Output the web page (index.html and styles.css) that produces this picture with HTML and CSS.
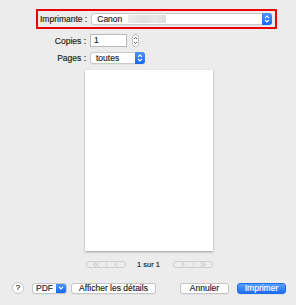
FILE: index.html
```html
<!DOCTYPE html>
<html lang="fr">
<head>
  <meta charset="UTF-8">
  <title>Imprimer</title>
  <meta name="viewport" content="width=device-width, initial-scale=1.0">
  <link rel="stylesheet" href="styles.css">
</head>
<body>
  <div class="dialog">
    <div class="printer-box">
      <span class="label">Imprimante :</span>
      <div class="popup popup-wide">
        <span class="popup-text">Canon</span>
        <span class="blurred"></span>
        <span class="arrows">
          <svg width="6" height="8" viewBox="0 0 6 8"><path d="M1 3 L3 1 L5 3 M1 5 L3 7 L5 5" fill="none" stroke="#fff" stroke-width="1.1"/></svg>
        </span>
      </div>
    </div>

    <div class="form">
      <span class="label">Copies :</span>
      <div class="copies">
        <div class="field">1</div>
        <div class="stepper">
          <svg width="5" height="9" viewBox="0 0 5 9"><path d="M1 3 L2.5 1.5 L4 3 M1 6 L2.5 7.5 L4 6" fill="none" stroke="#444" stroke-width="0.9"/></svg>
        </div>
      </div>
      <span class="label">Pages :</span>
      <div class="popup popup-small">
        <span class="popup-text">toutes</span>
        <span class="arrows">
          <svg width="6" height="8" viewBox="0 0 6 8"><path d="M1 3 L3 1 L5 3 M1 5 L3 7 L5 5" fill="none" stroke="#fff" stroke-width="1.1"/></svg>
        </span>
      </div>
    </div>

    <div class="preview">
      <div class="page"></div>
    </div>

    <div class="pager">
      <div class="seg">
        <span><svg width="6" height="5" viewBox="0 0 6 5"><path d="M2.5 0.5 L0.8 2.5 L2.5 4.5 M5.2 0.5 L3.5 2.5 L5.2 4.5" fill="none" stroke="#a8a8a8" stroke-width="0.7"/></svg></span>
        <span><svg width="4" height="5" viewBox="0 0 4 5"><path d="M2.8 0.5 L1 2.5 L2.8 4.5" fill="none" stroke="#a8a8a8" stroke-width="0.7"/></svg></span>
      </div>
      <span class="pager-text">1 sur 1</span>
      <div class="seg">
        <span><svg width="4" height="5" viewBox="0 0 4 5"><path d="M1.2 0.5 L3 2.5 L1.2 4.5" fill="none" stroke="#a8a8a8" stroke-width="0.7"/></svg></span>
        <span><svg width="6" height="5" viewBox="0 0 6 5"><path d="M0.8 0.5 L2.5 2.5 L0.8 4.5 M3.5 0.5 L5.2 2.5 L3.5 4.5" fill="none" stroke="#a8a8a8" stroke-width="0.7"/></svg></span>
      </div>
    </div>

    <div class="footer">
      <div class="help">?</div>
      <div class="btn pdf">
        <span class="pdf-text">PDF</span>
        <span class="pdf-arrow">
          <svg width="6" height="4" viewBox="0 0 6 4"><path d="M1 1 L3 3 L5 1" fill="none" stroke="#fff" stroke-width="1.1"/></svg>
        </span>
      </div>
      <div class="btn details">Afficher les détails</div>
      <div class="spacer"></div>
      <div class="btn cancel">Annuler</div>
      <div class="btn primary">Imprimer</div>
    </div>
  </div>
</body>
</html>
```

FILE: styles.css
```css
html, body {
  margin: 0;
  padding: 0;
  background-color: #ececec;
  color: #1a1a1a;
  font-family: 'Liberation Sans', Arial, sans-serif;
  font-size: 8.5px;
  -webkit-text-stroke: 0.15px #1a1a1a;
}
.dialog {
  width: 296px;
  height: 305px;
  display: flex;
  flex-direction: column;
  overflow: hidden;
}
.label {
  white-space: nowrap;
}
.printer-box {
  box-sizing: border-box;
  margin: 9px 0 0 36px;
  width: 241px;
  height: 20px;
  border: 2px solid #ee0000;
  padding: 0 3px 0 2px;
  display: flex;
  align-items: center;
  gap: 4px;
}
.popup {
  box-sizing: border-box;
  height: 12px;
  background: #fff;
  border: 1px solid #c9c9c9;
  border-radius: 3px;
  display: flex;
  align-items: center;
  padding-left: 5px;
  box-shadow: 0 0.5px 0.5px rgba(0, 0, 0, 0.08);
}
.popup-wide {
  flex-grow: 1;
}
.popup-small {
  width: 55px;
}
.popup-text {
  line-height: 10px;
}
.blurred {
  width: 38px;
  height: 8px;
  margin-left: 6px;
  background: linear-gradient(90deg, #ececec, #e0e0e0 40%, #e8e8e8 70%, #dedede);
  filter: blur(0.6px);
}
.arrows {
  margin-left: auto;
  width: 10px;
  height: 12px;
  margin-right: -1px;
  margin-top: -1px;
  margin-bottom: -1px;
  border-radius: 0 3px 3px 0;
  background: linear-gradient(#4c93fb, #1668f2);
  display: flex;
  align-items: center;
  justify-content: center;
}
.form {
  display: grid;
  grid-template-columns: 86px auto;
  column-gap: 4px;
  row-gap: 5px;
  margin-top: 5px;
  align-items: center;
  justify-items: start;
}
.form .label {
  justify-self: end;
}
.copies {
  display: flex;
  align-items: center;
  gap: 5px;
}
.field {
  box-sizing: border-box;
  width: 37px;
  height: 13px;
  background: #fff;
  border: 1px solid #b9b9b9;
  padding-left: 3px;
  line-height: 11px;
}
.stepper {
  box-sizing: border-box;
  width: 7px;
  height: 13px;
  background: #fff;
  border: 1px solid #c4c4c4;
  border-radius: 3px;
  display: flex;
  align-items: center;
  justify-content: center;
}
.preview {
  display: flex;
  justify-content: center;
  margin-top: 6px;
  padding-left: 2px;
}
.page {
  width: 128px;
  height: 181px;
  background: #fff;
  box-shadow: 0 1px 2px rgba(0, 0, 0, 0.35);
}
.pager {
  display: flex;
  align-items: center;
  margin: 9px 0 0 86px;
  width: 127px;
  height: 9px;
}
.seg {
  box-sizing: border-box;
  width: 40px;
  height: 7px;
  border: 1px solid #cfcfcf;
  border-radius: 3px;
  display: flex;
}
.seg span {
  flex: 1;
  display: flex;
  align-items: center;
  justify-content: center;
}
.seg span + span {
  border-left: 1px solid #d6d6d6;
}
.pager-text {
  flex: 1;
  text-align: center;
  font-size: 7.5px;
  padding-right: 2px;
}
.footer {
  display: flex;
  align-items: center;
  margin-top: 13px;
  padding: 0 10px 0 12px;
  height: 12px;
}
.help {
  box-sizing: border-box;
  width: 12px;
  height: 12px;
  border-radius: 50%;
  background: #fff;
  border: 1px solid #c6c6c6;
  text-align: center;
  line-height: 10px;
  font-size: 8px;
  margin-right: 8px;
}
.btn {
  box-sizing: border-box;
  height: 11px;
  background: #fff;
  border: 1px solid #c6c6c6;
  border-radius: 3px;
  display: flex;
  align-items: center;
  justify-content: center;
  line-height: 9px;
  box-shadow: 0 0.5px 0.5px rgba(0, 0, 0, 0.08);
}
.pdf {
  width: 35px;
  justify-content: flex-start;
  overflow: hidden;
}
.pdf-text {
  flex: 1;
  text-align: center;
}
.pdf-arrow {
  width: 10px;
  align-self: stretch;
  background: linear-gradient(#4c93fb, #1668f2);
  display: flex;
  align-items: center;
  justify-content: center;
}
.details {
  width: 85px;
  margin-left: 4px;
}
.spacer {
  flex: 1;
}
.cancel {
  width: 49px;
}
.primary {
  width: 49px;
  margin-left: 8px;
  color: #fff;
  -webkit-text-stroke: 0.15px #fff;
  border-color: #1f6fe9;
  background: linear-gradient(#5aa0fc, #1a6df3);
}
```
